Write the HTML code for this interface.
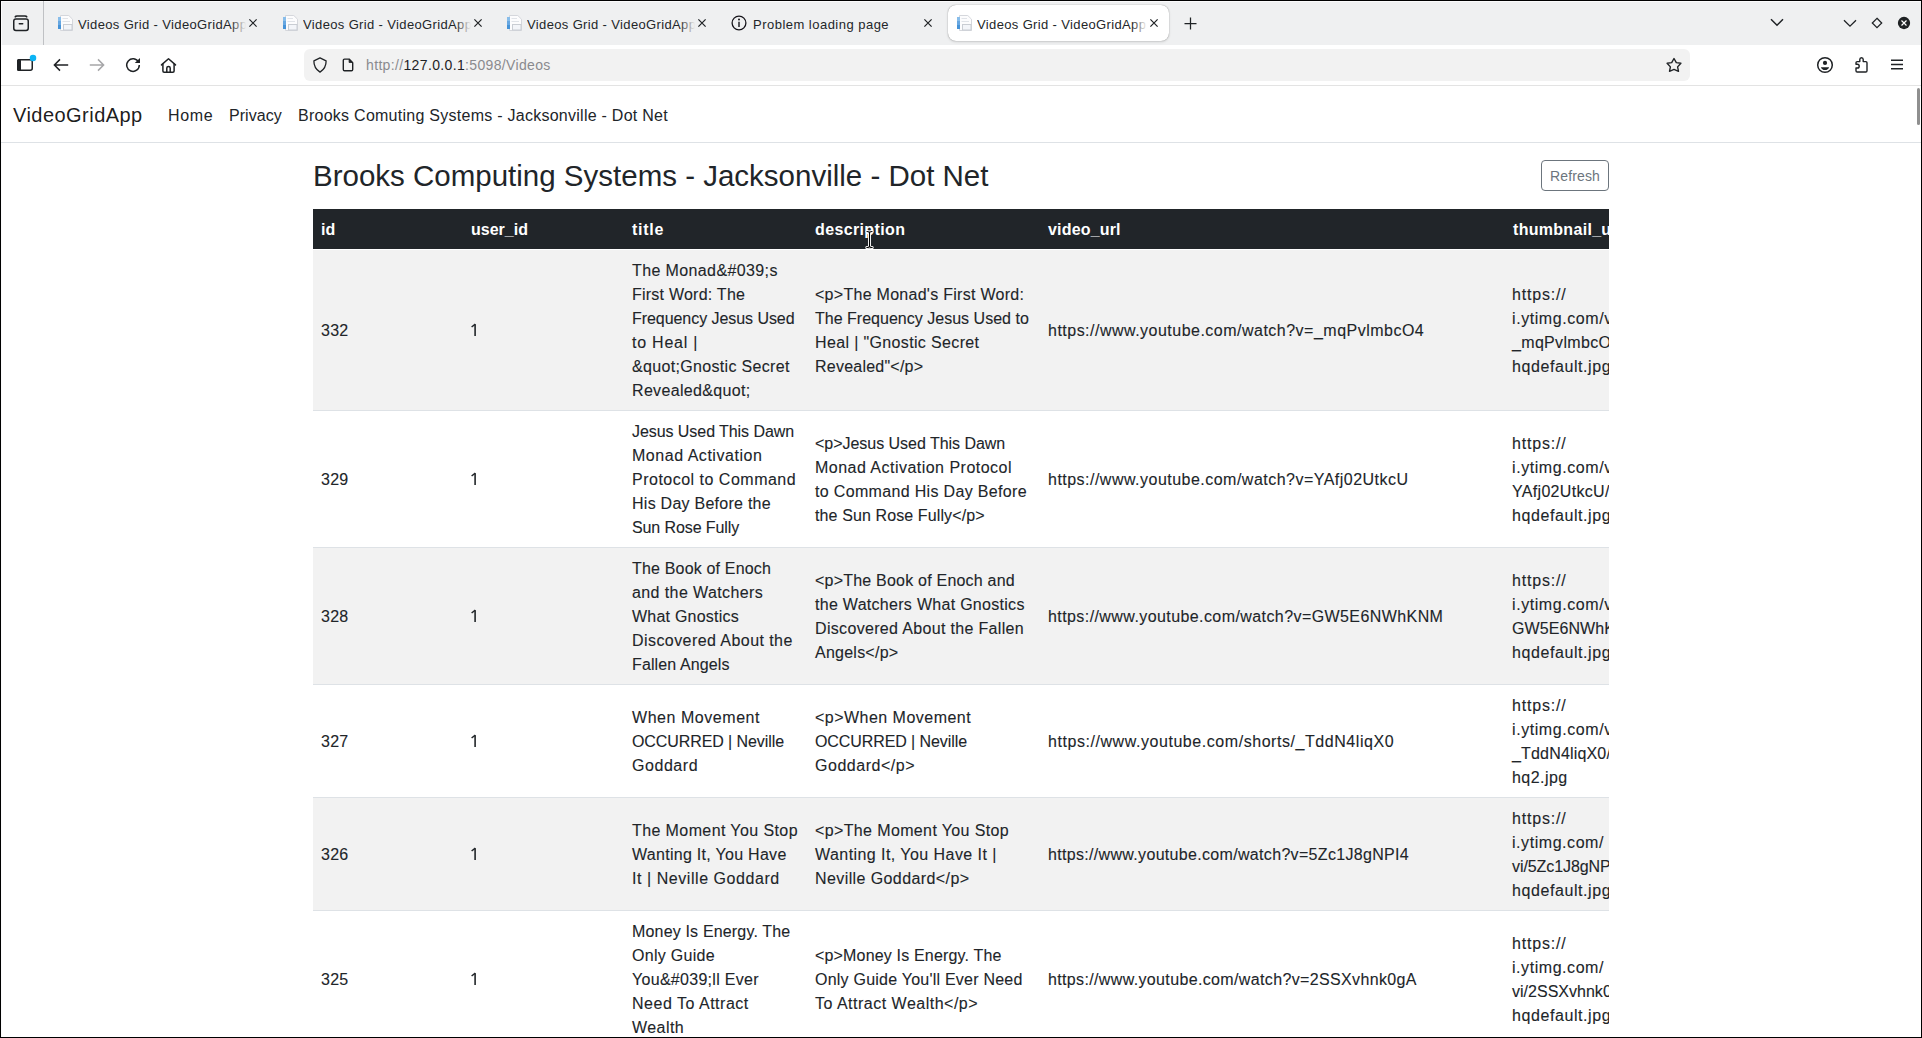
<!DOCTYPE html>
<html><head><meta charset="utf-8">
<style>
*{box-sizing:border-box;margin:0;padding:0}
html,body{width:1922px;height:1038px;overflow:hidden;background:#fff;font-family:"Liberation Sans",sans-serif;position:relative}
.a{position:absolute}
#tabbar{position:absolute;left:0;top:0;width:1922px;height:45px;background:#eff0f1}
#toolbar{position:absolute;left:0;top:45px;width:1922px;height:41px;background:#fff;border-bottom:1px solid #e3e3e3}
#nav{position:absolute;left:0;top:86px;width:1922px;height:57px;background:#fff;border-bottom:1px solid #dee2e6}
.brand{position:absolute;left:13px;top:100px;font-size:20px;letter-spacing:0.46px;line-height:30px;color:rgba(0,0,0,.9);white-space:nowrap}
.nl{position:absolute;top:104px;font-size:16px;line-height:24px;color:#212529;white-space:nowrap}
h1{position:absolute;left:313px;top:158px;font-size:29.5px;letter-spacing:0px;font-weight:400;line-height:35px;color:#212529;white-space:nowrap}
.btn{position:absolute;left:1541px;top:160px;width:68px;height:31px;border:1px solid #6c757d;border-radius:4px;font-size:14px;letter-spacing:0.15px;line-height:31px;text-align:center;color:#6c757d}
#tbl{position:absolute;left:313px;top:209px;width:1296px;height:829px;overflow:hidden}
.thead{position:absolute;left:0;top:0;width:1296px;height:40px;background:#212529}
.row{position:absolute;left:0;width:1296px;background:#fff}
.row.st{background:#f2f2f2}
.rb{position:absolute;left:0;width:1296px;height:1px;background:#dee2e6}
.c{position:absolute;top:1px;height:100%;display:flex;align-items:center;padding-left:8px;font-size:16px;line-height:24px;color:#212529;white-space:nowrap;-webkit-text-stroke:0.1px #212529}
.c.h{color:#fff;font-weight:700;-webkit-text-stroke:0}


.tabt{position:absolute;top:16px;font-size:13px;letter-spacing:0.36px;line-height:18px;color:#232629;white-space:nowrap;overflow:hidden;height:20px}
.fade{position:absolute;top:0;right:0;width:15px;height:20px;background:linear-gradient(to right,rgba(239,240,241,0),#eff0f1)}
.act .fade{background:linear-gradient(to right,rgba(255,255,255,0),#fff)}
.frame{position:absolute;background:#000}
</style></head><body>
<div id="tabbar"></div>
<div class="a" style="left:1px;top:1px;width:1920px;height:1px;background:#fbfbfc"></div>
<div class="a" style="left:1px;top:1px;width:1px;height:1036px;background:#fbfbfc"></div>
<!-- firefox view icon -->
<svg class="a" style="left:12px;top:14px" width="18" height="18" viewBox="0 0 18 18"><g fill="none" stroke="#1f2225" stroke-width="1.5" stroke-linecap="round"><path d="M3.2 2.9 Q3.6 2 5 2 L13 2 Q14.4 2 14.8 2.9"/><rect x="1.75" y="4.9" width="14.5" height="11.6" rx="2.2"/><path d="M7.3 9.7 H10.7"/></g></svg>
<div class="a" style="left:43px;top:1px;width:1px;height:44px;background:#bfc1c4"></div>
<svg class="a" style="left:57px;top:15px" width="16" height="16" viewBox="0 0 16 16"><path d="M3.5 0.5 H11.8 L15.5 4.2 V15.5 H3.5 Z" fill="#fcfcfd" stroke="#d5d7dc" stroke-width="1"/><rect x="1" y="2" width="3" height="4" fill="#88bdea"/><rect x="1" y="6" width="3" height="4" fill="#67a7e1"/><rect x="1" y="10" width="3" height="4" fill="#4693d8"/><path d="M5.5 3.5 H11 M5.5 6.5 H13" stroke="#e0e3e8" stroke-width="1"/><rect x="6.5" y="9.5" width="8.5" height="5.5" fill="#f3f5f9" stroke="#c9cdd3" stroke-width="1"/></svg>
<div class="tabt" style="left:78px;width:168px">Videos Grid - VideoGridApp<div class="fade"></div></div>
<svg class="a" style="left:248px;top:18px" width="10" height="10" viewBox="0 0 10 10"><path d="M1.4 1.4 L8.6 8.6 M8.6 1.4 L1.4 8.6" stroke="#1f2225" stroke-width="1.2"/></svg>
<svg class="a" style="left:282px;top:15px" width="16" height="16" viewBox="0 0 16 16"><path d="M3.5 0.5 H11.8 L15.5 4.2 V15.5 H3.5 Z" fill="#fcfcfd" stroke="#d5d7dc" stroke-width="1"/><rect x="1" y="2" width="3" height="4" fill="#88bdea"/><rect x="1" y="6" width="3" height="4" fill="#67a7e1"/><rect x="1" y="10" width="3" height="4" fill="#4693d8"/><path d="M5.5 3.5 H11 M5.5 6.5 H13" stroke="#e0e3e8" stroke-width="1"/><rect x="6.5" y="9.5" width="8.5" height="5.5" fill="#f3f5f9" stroke="#c9cdd3" stroke-width="1"/></svg>
<div class="tabt" style="left:303px;width:168px">Videos Grid - VideoGridApp<div class="fade"></div></div>
<svg class="a" style="left:473px;top:18px" width="10" height="10" viewBox="0 0 10 10"><path d="M1.4 1.4 L8.6 8.6 M8.6 1.4 L1.4 8.6" stroke="#1f2225" stroke-width="1.2"/></svg>
<svg class="a" style="left:506px;top:15px" width="16" height="16" viewBox="0 0 16 16"><path d="M3.5 0.5 H11.8 L15.5 4.2 V15.5 H3.5 Z" fill="#fcfcfd" stroke="#d5d7dc" stroke-width="1"/><rect x="1" y="2" width="3" height="4" fill="#88bdea"/><rect x="1" y="6" width="3" height="4" fill="#67a7e1"/><rect x="1" y="10" width="3" height="4" fill="#4693d8"/><path d="M5.5 3.5 H11 M5.5 6.5 H13" stroke="#e0e3e8" stroke-width="1"/><rect x="6.5" y="9.5" width="8.5" height="5.5" fill="#f3f5f9" stroke="#c9cdd3" stroke-width="1"/></svg>
<div class="tabt" style="left:527px;width:168px">Videos Grid - VideoGridApp<div class="fade"></div></div>
<svg class="a" style="left:697px;top:18px" width="10" height="10" viewBox="0 0 10 10"><path d="M1.4 1.4 L8.6 8.6 M8.6 1.4 L1.4 8.6" stroke="#1f2225" stroke-width="1.2"/></svg>
<svg class="a" style="left:731px;top:15px" width="16" height="16" viewBox="0 0 16 16"><circle cx="8" cy="8" r="6.9" fill="none" stroke="#15141a" stroke-width="1.3"/><circle cx="8" cy="4.6" r="1" fill="#15141a"/><path d="M8 6.8 V12" stroke="#15141a" stroke-width="1.4"/></svg>
<div class="tabt" style="left:753px;width:150px;letter-spacing:0.48px">Problem loading page</div>
<svg class="a" style="left:923px;top:18px" width="10" height="10" viewBox="0 0 10 10"><path d="M1.4 1.4 L8.6 8.6 M8.6 1.4 L1.4 8.6" stroke="#1f2225" stroke-width="1.2"/></svg>
<div class="a" style="left:948px;top:5px;width:221px;height:36px;border-radius:8px;background:#fff;box-shadow:0 0 1px rgba(0,0,0,.5),0 1px 3px rgba(0,0,0,.12)"></div>
<svg class="a" style="left:956px;top:15px" width="16" height="16" viewBox="0 0 16 16"><path d="M3.5 0.5 H11.8 L15.5 4.2 V15.5 H3.5 Z" fill="#fcfcfd" stroke="#d5d7dc" stroke-width="1"/><rect x="1" y="2" width="3" height="4" fill="#88bdea"/><rect x="1" y="6" width="3" height="4" fill="#67a7e1"/><rect x="1" y="10" width="3" height="4" fill="#4693d8"/><path d="M5.5 3.5 H11 M5.5 6.5 H13" stroke="#e0e3e8" stroke-width="1"/><rect x="6.5" y="9.5" width="8.5" height="5.5" fill="#f3f5f9" stroke="#c9cdd3" stroke-width="1"/></svg>
<div class="tabt act" style="left:977px;width:170px">Videos Grid - VideoGridApp<div class="fade"></div></div>
<svg class="a" style="left:1149px;top:18px" width="10" height="10" viewBox="0 0 10 10"><path d="M1.4 1.4 L8.6 8.6 M8.6 1.4 L1.4 8.6" stroke="#1f2225" stroke-width="1.2"/></svg>
<!-- new tab plus -->
<svg class="a" style="left:1184px;top:17px" width="13" height="13" viewBox="0 0 13 13"><path d="M6.5 0.5V12.5M0.5 6.5H12.5" stroke="#1f2225" stroke-width="1.25"/></svg>
<!-- list all tabs chevron -->
<svg class="a" style="left:1770px;top:18px" width="14" height="9" viewBox="0 0 14 9"><path d="M1 1.2 L7 7.2 L13 1.2" fill="none" stroke="#1f2225" stroke-width="1.5"/></svg>
<!-- window controls -->
<svg class="a" style="left:1843px;top:19px" width="14" height="9" viewBox="0 0 14 9"><path d="M1 1.2 L7 7.2 L13 1.2" fill="none" stroke="#1f2225" stroke-width="1.3"/></svg>
<svg class="a" style="left:1870px;top:16px" width="14" height="14" viewBox="0 0 14 14"><path d="M7 2.3 L11.7 7 L7 11.7 L2.3 7 Z" fill="none" stroke="#1f2225" stroke-width="1.25"/></svg>
<svg class="a" style="left:1897px;top:16px" width="14" height="14" viewBox="0 0 14 14"><circle cx="7" cy="7" r="6.15" fill="#1f2224"/><path d="M4.5 4.5 L9.5 9.5 M9.5 4.5 L4.5 9.5" stroke="#fff" stroke-width="1.15"/></svg>

<div id="toolbar"></div>
<!-- sidebar icon -->
<svg class="a" style="left:15px;top:53px" width="24" height="20" viewBox="0 0 24 20"><rect x="2.75" y="6.75" width="14.5" height="10.5" rx="2" fill="none" stroke="#1f2225" stroke-width="1.5"/><rect x="2" y="6" width="4" height="12" rx="1.5" fill="#1f2225"/><circle cx="18" cy="5" r="3.25" fill="#0bb4f5"/></svg>
<!-- back -->
<svg class="a" style="left:52px;top:57px" width="18" height="16" viewBox="0 0 18 16"><path d="M2.6 8 H16.2 M8 2.4 L2.4 8 L8 13.6" fill="none" stroke="#1f2225" stroke-width="1.5"/></svg>
<!-- forward -->
<svg class="a" style="left:88px;top:57px" width="18" height="16" viewBox="0 0 18 16"><path d="M15.4 8 H1.8 M10 2.4 L15.6 8 L10 13.6" fill="none" stroke="#a6a6a8" stroke-width="1.5"/></svg>
<!-- reload -->
<svg class="a" style="left:124px;top:56px" width="18" height="18" viewBox="0 0 18 18"><path d="M14.6 6.2 A6.3 6.3 0 1 0 15.3 9" fill="none" stroke="#1f2225" stroke-width="1.5"/><path d="M16 1.9 V7.1 H10.8 Z" fill="#1f2225"/></svg>
<!-- home -->
<svg class="a" style="left:159px;top:56px" width="19" height="19" viewBox="0 0 19 19"><path d="M2.5 8.9 L9.5 2.8 L16.5 8.9" fill="none" stroke="#1f2225" stroke-width="1.5" stroke-linecap="round" stroke-linejoin="round"/><path d="M3.9 7.8 V15 Q3.9 16.2 5.1 16.2 H13.9 Q15.1 16.2 15.1 15 V7.8" fill="none" stroke="#1f2225" stroke-width="1.5"/><path d="M7.8 16.2 V11.9 Q7.8 10.5 9.5 10.5 Q11.2 10.5 11.2 11.9 V16.2" fill="none" stroke="#1f2225" stroke-width="1.5"/></svg>
<!-- urlbar -->
<div class="a" style="left:304px;top:49px;width:1386px;height:32px;border-radius:6px;background:#f2f2f2"></div>
<svg class="a" style="left:311px;top:56px" width="18" height="18" viewBox="0 0 18 18"><path d="M9 1.9 L15.1 4.9 Q15.3 11.9 9 16.1 Q2.7 11.9 2.9 4.9 Z" fill="none" stroke="#1f2225" stroke-width="1.3" stroke-linejoin="round"/></svg>
<svg class="a" style="left:339px;top:57px" width="17" height="17" viewBox="0 0 17 17"><path d="M4.3 3.3 Q4.3 2.1 5.5 2.1 H10.1 L13.7 5.7 V12.5 Q13.7 13.7 12.5 13.7 H5.5 Q4.3 13.7 4.3 12.5 Z" fill="none" stroke="#1f2225" stroke-width="1.4" stroke-linejoin="round"/><path d="M10.1 2.1 V5.5 H13.7 Z" fill="#1f2225" stroke="#1f2225" stroke-width="0.8" stroke-linejoin="round"/></svg>
<div class="a" style="left:366px;top:55px;font-size:14px;letter-spacing:0.35px;line-height:20px;white-space:nowrap;color:#8a8a8e">http://<span style="color:#1f2225">127.0.0.1</span>:5098/Videos</div>
<!-- star -->
<svg class="a" style="left:1665px;top:56px" width="18" height="18" viewBox="0 0 18 18"><path d="M9 2.5 L11.3 6.6 L15.9 7.2 L12.6 10.9 L13.5 15.3 L9 13.4 L4.5 15.3 L5.4 10.9 L2.1 7.2 L6.7 6.6 Z" fill="none" stroke="#1f2225" stroke-width="1.4" stroke-linejoin="round"/></svg>
<!-- account -->
<svg class="a" style="left:1816px;top:56px" width="18" height="18" viewBox="0 0 18 18"><circle cx="9" cy="9" r="7.3" fill="none" stroke="#1f2225" stroke-width="1.5"/><circle cx="9" cy="6.9" r="2.1" fill="#1f2225"/><path d="M4.9 11.3 H13.1 Q12.2 14.1 9 14.1 Q5.8 14.1 4.9 11.3Z" fill="#1f2225"/></svg>
<!-- extensions -->
<svg class="a" style="left:1850px;top:54px" width="22" height="22" viewBox="0 0 22 22"><path d="M6 10.3 V8.8 Q6 7.6 7.2 7.6 H9.8 V5.6 Q9.8 3.8 11.5 3.8 Q13.2 3.8 13.2 5.6 V7.6 H15.8 Q17 7.6 17 8.8 V16.8 Q17 18 15.8 18 H7.2 Q6 18 6 16.8 V14 H7.4 Q9.2 14 9.2 12.15 Q9.2 10.3 7.4 10.3 Z" fill="none" stroke="#1f2225" stroke-width="1.4" stroke-linejoin="round"/></svg>
<!-- menu -->
<svg class="a" style="left:1889px;top:57px" width="16" height="15" viewBox="0 0 16 15"><path d="M2 3.2 H14 M2 7.5 H14 M2 11.8 H14" stroke="#1f2225" stroke-width="1.4"/></svg>
<!-- page scrollbar -->
<div class="a" style="left:1917px;top:88px;width:3px;height:37px;border-radius:2px;background:#8f8f8f;z-index:5"></div>

<div id="nav"></div>
<div class="brand">VideoGridApp</div>
<div class="nl" style="left:168px;letter-spacing:0.66px">Home</div>
<div class="nl" style="left:229px;letter-spacing:0.04px">Privacy</div>
<div class="nl" style="left:298px;letter-spacing:0.26px">Brooks Comuting Systems - Jacksonville - Dot Net</div>
<h1>Brooks Computing Systems - Jacksonville - Dot Net</h1>
<div class="btn">Refresh</div>
<div id="tbl">
<div class="thead"><div class="c h" style="left:0">id</div><div class="c h" style="left:150px">user_id</div><div class="c h" style="left:311px;letter-spacing:0.75px">title</div><div class="c h" style="left:494px;letter-spacing:0.37px">description</div><div class="c h" style="left:727px;letter-spacing:0.17px">video_url</div><div class="c h" style="left:1192px;letter-spacing:0.3px">thumbnail_url</div></div>
<div class="row st" style="top:41px;height:160px"><div class="c " style="left:0px"><div><div style="letter-spacing:0.251px">332</div></div></div><svg class="a" style="left:158px;top:72px" width="8" height="16" viewBox="0 0 8 16"><path d="M3.3 2.2 H4.9 V14 H3.3 Z" fill="#212529"/><path d="M0.6 5 L4.3 2.1" stroke="#212529" stroke-width="1.45" fill="none"/></svg><div class="c " style="left:311px"><div><div style="letter-spacing:0.385px">The Monad&amp;#039;s</div><div style="letter-spacing:0.232px">First Word: The</div><div style="letter-spacing:-0.055px">Frequency Jesus Used</div><div style="letter-spacing:0.764px">to Heal |</div><div style="letter-spacing:0.324px">&amp;quot;Gnostic Secret</div><div style="letter-spacing:0.330px">Revealed&amp;quot;</div></div></div><div class="c " style="left:494px"><div><div style="letter-spacing:0.279px">&lt;p&gt;The Monad's First Word:</div><div style="letter-spacing:0.014px">The Frequency Jesus Used to</div><div style="letter-spacing:0.355px">Heal | "Gnostic Secret</div><div style="letter-spacing:0.230px">Revealed"&lt;/p&gt;</div></div></div><div class="c u" style="left:727px"><div><div style="letter-spacing:0.487px">https://www.youtube.com/watch?v=_mqPvlmbcO4</div></div></div><div class="c th" style="left:1191px"><div><div style="letter-spacing:0.818px">https://</div><div style="letter-spacing:0.572px">i.ytimg.com/vi/</div><div style="letter-spacing:0.331px">_mqPvlmbcO4/</div><div style="letter-spacing:0.578px">hqdefault.jpg</div></div></div></div><div class="rb" style="top:201px"></div>
<div class="row" style="top:202px;height:136px"><div class="c " style="left:0px"><div><div style="letter-spacing:0.251px">329</div></div></div><svg class="a" style="left:158px;top:60px" width="8" height="16" viewBox="0 0 8 16"><path d="M3.3 2.2 H4.9 V14 H3.3 Z" fill="#212529"/><path d="M0.6 5 L4.3 2.1" stroke="#212529" stroke-width="1.45" fill="none"/></svg><div class="c " style="left:311px"><div><div style="letter-spacing:-0.063px">Jesus Used This Dawn</div><div style="letter-spacing:0.530px">Monad Activation</div><div style="letter-spacing:0.495px">Protocol to Command</div><div style="letter-spacing:0.258px">His Day Before the</div><div style="letter-spacing:-0.100px">Sun Rose Fully</div></div></div><div class="c " style="left:494px"><div><div style="letter-spacing:-0.032px">&lt;p&gt;Jesus Used This Dawn</div><div style="letter-spacing:0.478px">Monad Activation Protocol</div><div style="letter-spacing:0.334px">to Command His Day Before</div><div style="letter-spacing:0.113px">the Sun Rose Fully&lt;/p&gt;</div></div></div><div class="c u" style="left:727px"><div><div style="letter-spacing:0.481px">https://www.youtube.com/watch?v=YAfj02UtkcU</div></div></div><div class="c th" style="left:1191px"><div><div style="letter-spacing:0.818px">https://</div><div style="letter-spacing:0.572px">i.ytimg.com/vi/</div><div style="letter-spacing:0.312px">YAfj02UtkcU/</div><div style="letter-spacing:0.578px">hqdefault.jpg</div></div></div></div><div class="rb" style="top:338px"></div>
<div class="row st" style="top:339px;height:136px"><div class="c " style="left:0px"><div><div style="letter-spacing:0.251px">328</div></div></div><svg class="a" style="left:158px;top:60px" width="8" height="16" viewBox="0 0 8 16"><path d="M3.3 2.2 H4.9 V14 H3.3 Z" fill="#212529"/><path d="M0.6 5 L4.3 2.1" stroke="#212529" stroke-width="1.45" fill="none"/></svg><div class="c " style="left:311px"><div><div style="letter-spacing:0.179px">The Book of Enoch</div><div style="letter-spacing:0.399px">and the Watchers</div><div style="letter-spacing:0.230px">What Gnostics</div><div style="letter-spacing:0.434px">Discovered About the</div><div style="letter-spacing:0.117px">Fallen Angels</div></div></div><div class="c " style="left:494px"><div><div style="letter-spacing:0.213px">&lt;p&gt;The Book of Enoch and</div><div style="letter-spacing:0.291px">the Watchers What Gnostics</div><div style="letter-spacing:0.328px">Discovered About the Fallen</div><div style="letter-spacing:0.241px">Angels&lt;/p&gt;</div></div></div><div class="c u" style="left:727px"><div><div style="letter-spacing:0.416px">https://www.youtube.com/watch?v=GW5E6NWhKNM</div></div></div><div class="c th" style="left:1191px"><div><div style="letter-spacing:0.818px">https://</div><div style="letter-spacing:0.572px">i.ytimg.com/vi/</div><div style="letter-spacing:0.078px">GW5E6NWhKNM/</div><div style="letter-spacing:0.578px">hqdefault.jpg</div></div></div></div><div class="rb" style="top:475px"></div>
<div class="row" style="top:476px;height:112px"><div class="c " style="left:0px"><div><div style="letter-spacing:0.251px">327</div></div></div><svg class="a" style="left:158px;top:48px" width="8" height="16" viewBox="0 0 8 16"><path d="M3.3 2.2 H4.9 V14 H3.3 Z" fill="#212529"/><path d="M0.6 5 L4.3 2.1" stroke="#212529" stroke-width="1.45" fill="none"/></svg><div class="c " style="left:311px"><div><div style="letter-spacing:0.543px">When Movement</div><div style="letter-spacing:-0.087px">OCCURRED | Neville</div><div style="letter-spacing:0.556px">Goddard</div></div></div><div class="c " style="left:494px"><div><div style="letter-spacing:0.474px">&lt;p&gt;When Movement</div><div style="letter-spacing:-0.087px">OCCURRED | Neville</div><div style="letter-spacing:0.532px">Goddard&lt;/p&gt;</div></div></div><div class="c u" style="left:727px"><div><div style="letter-spacing:0.556px">https://www.youtube.com/shorts/_TddN4liqX0</div></div></div><div class="c th" style="left:1191px"><div><div style="letter-spacing:0.818px">https://</div><div style="letter-spacing:0.572px">i.ytimg.com/vi/</div><div style="letter-spacing:0.171px">_TddN4liqX0/</div><div style="letter-spacing:0.454px">hq2.jpg</div></div></div></div><div class="rb" style="top:588px"></div>
<div class="row st" style="top:589px;height:112px"><div class="c " style="left:0px"><div><div style="letter-spacing:0.251px">326</div></div></div><svg class="a" style="left:158px;top:48px" width="8" height="16" viewBox="0 0 8 16"><path d="M3.3 2.2 H4.9 V14 H3.3 Z" fill="#212529"/><path d="M0.6 5 L4.3 2.1" stroke="#212529" stroke-width="1.45" fill="none"/></svg><div class="c " style="left:311px"><div><div style="letter-spacing:0.400px">The Moment You Stop</div><div style="letter-spacing:0.287px">Wanting It, You Have</div><div style="letter-spacing:0.554px">It | Neville Goddard</div></div></div><div class="c " style="left:494px"><div><div style="letter-spacing:0.369px">&lt;p&gt;The Moment You Stop</div><div style="letter-spacing:0.442px">Wanting It, You Have It |</div><div style="letter-spacing:0.406px">Neville Goddard&lt;/p&gt;</div></div></div><div class="c u" style="left:727px"><div><div style="letter-spacing:0.320px">https://www.youtube.com/watch?v=5Zc1J8gNPI4</div></div></div><div class="c th" style="left:1191px"><div><div style="letter-spacing:0.818px">https://</div><div style="letter-spacing:0.553px">i.ytimg.com/</div><div style="letter-spacing:-0.084px">vi/5Zc1J8gNPI4/</div><div style="letter-spacing:0.578px">hqdefault.jpg</div></div></div></div><div class="rb" style="top:701px"></div>
<div class="row" style="top:702px;height:136px"><div class="c " style="left:0px"><div><div style="letter-spacing:0.251px">325</div></div></div><svg class="a" style="left:158px;top:60px" width="8" height="16" viewBox="0 0 8 16"><path d="M3.3 2.2 H4.9 V14 H3.3 Z" fill="#212529"/><path d="M0.6 5 L4.3 2.1" stroke="#212529" stroke-width="1.45" fill="none"/></svg><div class="c " style="left:311px"><div><div style="letter-spacing:0.169px">Money Is Energy. The</div><div style="letter-spacing:0.277px">Only Guide</div><div style="letter-spacing:0.293px">You&amp;#039;ll Ever</div><div style="letter-spacing:0.511px">Need To Attract</div><div style="letter-spacing:0.443px">Wealth</div></div></div><div class="c " style="left:494px"><div><div style="letter-spacing:0.170px">&lt;p&gt;Money Is Energy. The</div><div style="letter-spacing:0.230px">Only Guide You'll Ever Need</div><div style="letter-spacing:0.496px">To Attract Wealth&lt;/p&gt;</div></div></div><div class="c u" style="left:727px"><div><div style="letter-spacing:0.355px">https://www.youtube.com/watch?v=2SSXvhnk0gA</div></div></div><div class="c th" style="left:1191px"><div><div style="letter-spacing:0.818px">https://</div><div style="letter-spacing:0.553px">i.ytimg.com/</div><div style="letter-spacing:0.016px">vi/2SSXvhnk0gA/</div><div style="letter-spacing:0.578px">hqdefault.jpg</div></div></div></div><div class="rb" style="top:838px"></div></div>
<svg class="a" style="left:862px;top:227px;z-index:10" width="16" height="24" viewBox="862 227 16 24"><g fill="none" stroke-linecap="round"><path d="M867 231.5 Q869.5 231.5 869.5 233 Q869.5 231.5 872 231.5 M869.5 232.5 V246.5 M866.8 247.5 Q869.5 247.5 869.5 246 Q869.5 247.5 872.2 247.5" stroke="#fff" stroke-width="3"/><path d="M867 231.5 Q869.5 231.5 869.5 233 Q869.5 231.5 872 231.5 M869.5 232.5 V246.5 M866.8 247.5 Q869.5 247.5 869.5 246 Q869.5 247.5 872.2 247.5" stroke="#000" stroke-width="1.1"/></g></svg>
<div class="frame" style="left:0;top:0;width:1922px;height:1px"></div>
<div class="frame" style="left:0;top:0;width:1px;height:1038px"></div>
<div class="frame" style="left:1921px;top:0;width:1px;height:1038px"></div>
<div class="frame" style="left:0;top:1037px;width:1922px;height:1px"></div>
</body></html>
